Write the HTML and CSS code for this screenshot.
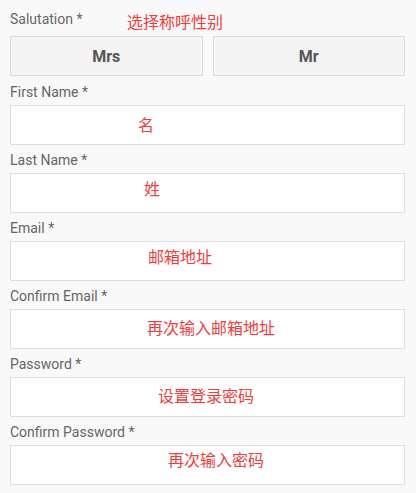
FILE: index.html
```html
<!DOCTYPE html>
<html lang="en">
<head>
<meta charset="utf-8">
<title>Register</title>
<link rel="stylesheet" href="styles.css">
</head>
<body>
<form class="form">
  <div class="field field-salutation">
    <div class="label">Salutation *<span class="note note-salutation">选择称呼性别</span></div>
    <div class="choices">
      <div class="choice">Mrs</div>
      <div class="choice">Mr</div>
    </div>
  </div>
  <div class="field">
    <div class="label">First Name *</div>
    <div class="box"><span class="note note-first">名</span></div>
  </div>
  <div class="field">
    <div class="label">Last Name *</div>
    <div class="box"><span class="note note-last">姓</span></div>
  </div>
  <div class="field">
    <div class="label">Email *</div>
    <div class="box"><span class="note note-email">邮箱地址</span></div>
  </div>
  <div class="field">
    <div class="label">Confirm Email *</div>
    <div class="box"><span class="note note-email2">再次输入邮箱地址</span></div>
  </div>
  <div class="field">
    <div class="label">Password *</div>
    <div class="box"><span class="note note-pass">设置登录密码</span></div>
  </div>
  <div class="field">
    <div class="label">Confirm Password *</div>
    <div class="box"><span class="note note-pass2">再次输入密码</span></div>
  </div>
</form>
</body>
</html>
```
FILE: styles.css
```css
html, body {
  margin: 0;
  padding: 0;
  background: #f9f9f9;
}
body {
  font-family: Roboto, "Liberation Sans", sans-serif;
  width: 416px;
  height: 493px;
  overflow: hidden;
}
.form {
  padding: 8px 11px 0 10px;
  display: flex;
  flex-direction: column;
}
.field {
  display: flex;
  flex-direction: column;
  margin-bottom: 4px;
}
.field-salutation {
  margin-bottom: 5px;
}
.label {
  position: relative;
  font-size: 14px;
  line-height: 20px;
  padding-top: 1px;
  color: #666;
  margin-bottom: 3px;
}
.field-salutation .label {
  margin-bottom: 7px;
}
.choices {
  display: grid;
  grid-template-columns: 1fr 1fr;
  gap: 10px;
}
.choice {
  height: 40px;
  box-sizing: border-box;
  border: 1px solid #dddddd;
  background: #f4f4f4;
  display: flex;
  align-items: center;
  justify-content: center;
  font-size: 16px;
  font-weight: 700;
  color: #555;
}
.box {
  position: relative;
  height: 40px;
  box-sizing: border-box;
  border: 1px solid #dddddd;
  background: #fff;
}
.note {
  position: absolute;
  font-family: "Noto Sans CJK SC", sans-serif;
  font-size: 16px;
  line-height: 16px;
  color: #f63b3b;
  white-space: nowrap;
}
.note-salutation { left: 117px; top: 5px; }
.note-first { left: 127px; top: 10px; }
.note-last { left: 133px; top: 6px; }
.note-email { left: 137px; top: 6px; }
.note-email2 { left: 136px; top: 9px; }
.note-pass { left: 147px; top: 9px; }
.note-pass2 { left: 157px; top: 5px; }
```
